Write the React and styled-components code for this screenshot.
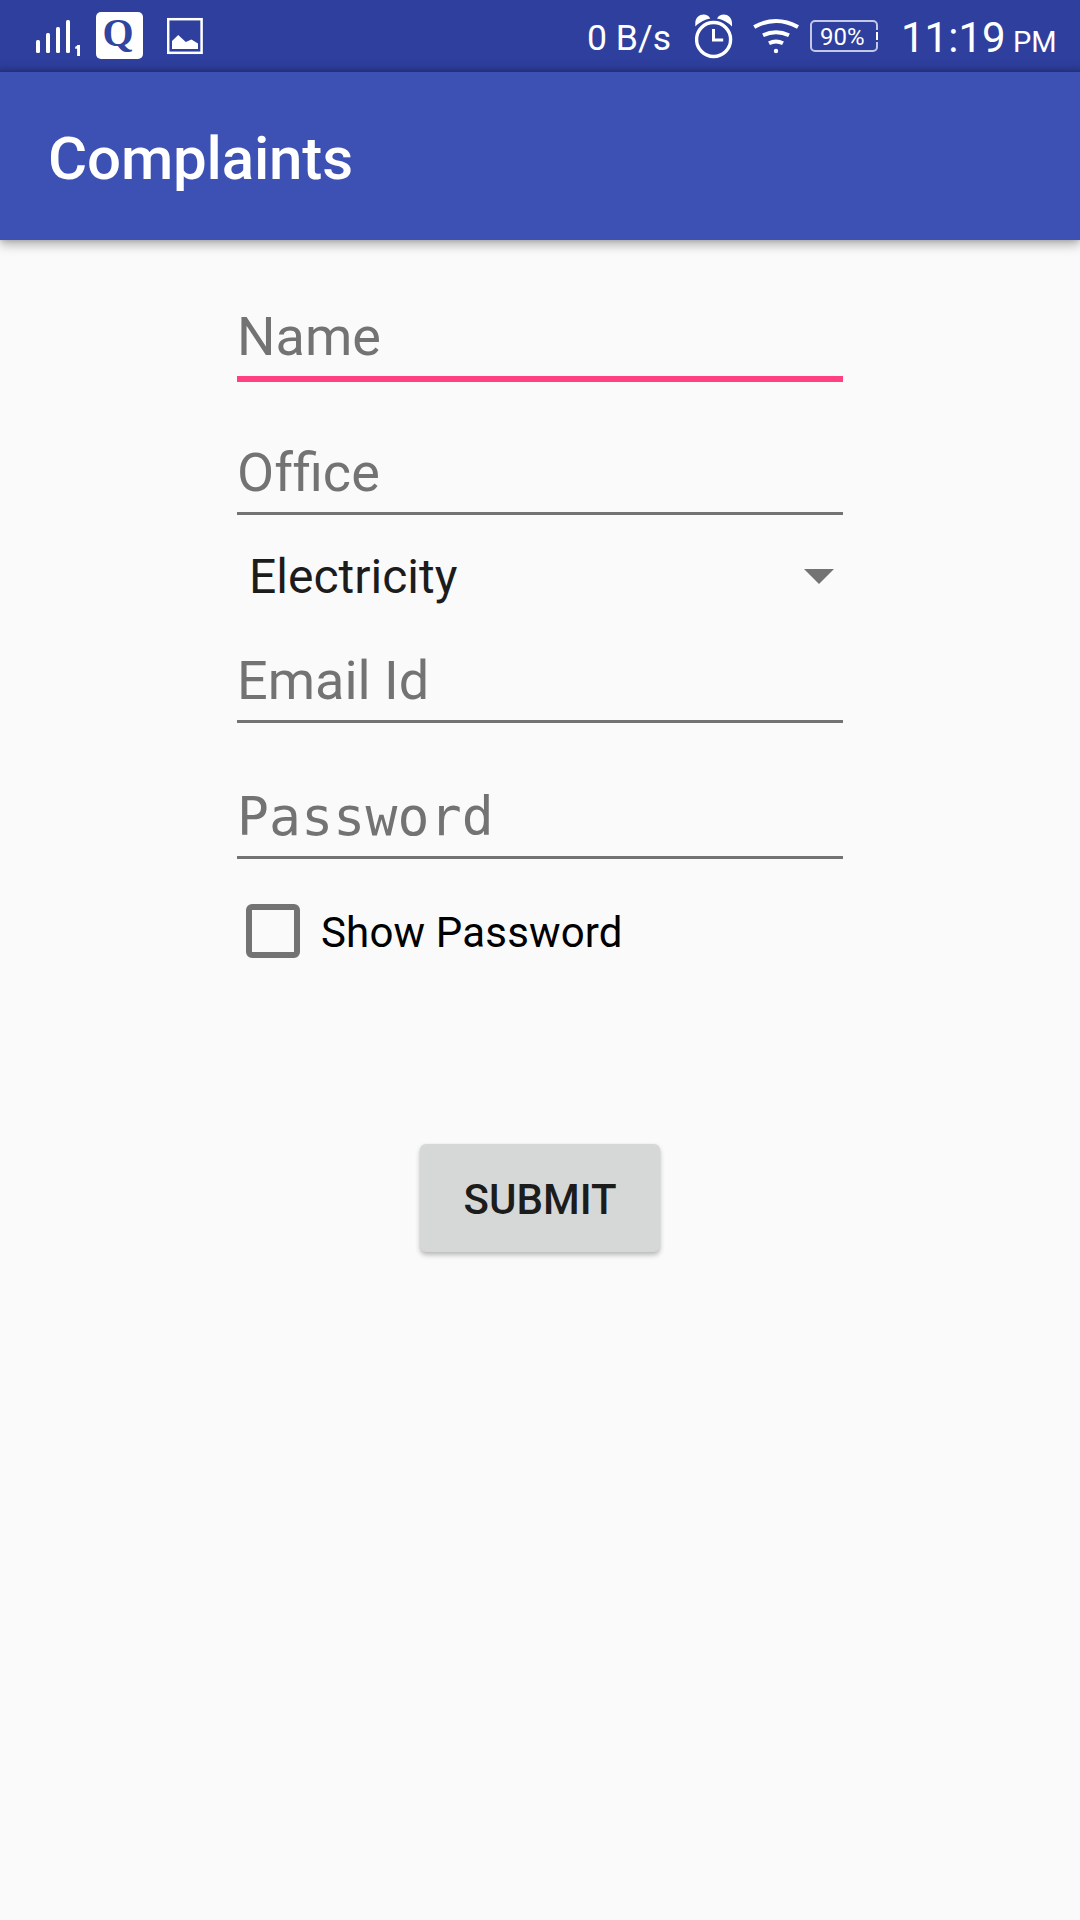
import React from "react";
import styled, { createGlobalStyle } from "styled-components";

const GlobalStyle = createGlobalStyle`
  *, *::before, *::after { box-sizing: border-box; }
  body { margin: 0; background: #fafafa; font-family: Roboto, sans-serif; }
`;

const Screen = styled.div`
  width: 1080px;
  height: 1920px;
  display: flex;
  flex-direction: column;
  background: #fafafa;
  overflow: hidden;
`;

const StatusBar = styled.div`
  flex: none;
  height: 72px;
  display: flex;
  justify-content: space-between;
  padding: 0 26px 0 36px;
  color: #fff;
  background: linear-gradient(to top, #27347f 0, #2b3a92 4px, #2d3d9a 8px, #2e3f9e 14px);
`;

const StatusGroup = styled.div`
  display: flex;
  align-items: flex-start;
`;

const StatusIcon = styled.svg`
  display: block;
  flex: none;
  width: ${(p) => p.$w}px;
  height: 72px;
  margin-right: ${(p) => p.$gap || 0}px;
`;

const AppBadge = styled.div`
  width: 47px;
  height: 47px;
  margin: 12px 24px 0 0;
  border-radius: 5px;
  background: #fff;
  color: #2f459f;
  font: 700 40px/41px "Liberation Serif", serif;
  text-align: center;
  padding-right: 3px;
`;

const StatusText = styled.span`
  display: block;
  font-size: ${(p) => p.$size}px;
  line-height: ${(p) => p.$line}px;
  width: ${(p) => p.$w}px;
  white-space: nowrap;
`;

const Battery = styled.div`
  display: flex;
  position: relative;
  width: 68px;
  height: 32px;
  margin: 20px 23px 0 0;
  padding-left: 8px;
  border: 2px solid #c3c8e6;
  border-radius: 5px;

  &::after {
    content: "";
    position: absolute;
    right: -2px;
    top: 8px;
    width: 2px;
    height: 12px;
    background: linear-gradient(#2e3f9e 2px, #fff 2px, #fff 10px, #2e3f9e 10px);
  }
`;

const AppBar = styled.header`
  flex: none;
  height: 168px;
  padding-left: 48px;
  display: flex;
  align-items: center;
  background: #3d51b4;
  box-shadow: 0 5px 10px rgba(0, 0, 0, 0.28), 0 1px 4px rgba(0, 0, 0, 0.12);
`;

const Title = styled.h1`
  margin: 0;
  padding-top: 5px;
  color: #fff;
  font-size: 60px;
  font-weight: 500;
  line-height: 70px;
  letter-spacing: -0.15px;
`;

const Form = styled.main`
  width: 606px;
  margin: 18px auto 0;
  display: flex;
  flex-direction: column;
`;

const Field = styled.div`
  height: 136px;
  padding-top: 42px;
  color: #737373;
  font-size: 54px;
  line-height: 73px;
`;

const FieldText = styled.div`
  height: 76px;
`;

const MonoText = styled(FieldText)`
  font-family: "DejaVu Sans Mono", monospace;
  font-size: 53px;
  letter-spacing: 0.2px;
`;

/* Shapes its letters apart from the following text, so no ligature spans the two. */
const Unjoined = styled.span`
  display: inline-block;
`;

const Underline = styled.div`
  height: ${(p) => (p.$active ? 6 : 3)}px;
  background: ${(p) => (p.$active ? "#ff4081" : "#737373")};
`;

const Spinner = styled.div`
  height: 72px;
  display: flex;
  justify-content: space-between;
  padding: 0 9px 0 12px;
  color: #1c1c1c;
  font-size: 48px;
  line-height: 93px;
`;

const Caret = styled.svg`
  width: 30px;
  height: 15px;
  margin-top: 39px;
  fill: #737373;
`;

const CheckRow = styled.div`
  display: flex;
  align-items: center;
  height: 54px;
  margin: 30px 0 0 9px;
  gap: 21px;
  color: #000;
`;

const CheckBox = styled.span`
  width: 54px;
  height: 54px;
  border: 6px solid #737373;
  border-radius: 6px;
`;

const CheckLabel = styled.span`
  padding-top: 4px;
  font-size: 42px;
  line-height: 56px;
  letter-spacing: 0.17px;
`;

const SubmitButton = styled.button`
  align-self: center;
  width: 240px;
  height: 108px;
  margin-top: 186px;
  padding: 4px 0 0;
  border: 0;
  border-radius: 6px;
  background: #d6d8d7;
  color: #1c1c1c;
  font: 500 42px/50px Roboto, sans-serif;
  box-shadow: 0 3px 5px rgba(0, 0, 0, 0.26), 0 0 2px rgba(0, 0, 0, 0.06);
`;

function SignalIcon() {
  return (
    <StatusIcon $w={45} $gap={15} viewBox="36 0 45 72" fill="#fff">
      <rect x="36" y="40" width="4" height="13" rx="1.5" />
      <rect x="46" y="33" width="4" height="20" rx="1.5" />
      <rect x="56" y="27" width="4" height="26" rx="1.5" />
      <rect x="66" y="20" width="4" height="33" rx="1.5" />
      <path d="M77.3 45h2.7v11h-2.900v-7.200h-1.900v-2.100q1.600-.2 2.100-1.700z" />
    </StatusIcon>
  );
}

function PictureIcon() {
  return (
    <StatusIcon $w={36} viewBox="167 0 36 72">
      <rect x="168.2" y="19.2" width="33.4" height="33.6" fill="none" stroke="#fff" strokeWidth="2.5" />
      <path d="M172 41l6.200-6 7.600 7 5.600-2.600 6.600 4V49h-26z" fill="#fff" />
    </StatusIcon>
  );
}

function AlarmIcon() {
  return (
    <StatusIcon $w={38} $gap={20} viewBox="695 0 38 72">
      <circle cx="713.6" cy="39.5" r="17" fill="none" stroke="#fff" strokeWidth="3.4" />
      <path
        d="M695.300 26.500v-3.300c0-10 12-11.400 15-4.700q-8.500 1.500-15 8zM732 26.500v-3.300c0-10-12-11.400-15-4.700q8.500 1.500 15 8z"
        fill="#fff"
      />
      <path d="M713.500 29v11h9.700" fill="none" stroke="#fff" strokeWidth="3" />
    </StatusIcon>
  );
}

function WifiIcon() {
  return (
    <StatusIcon $w={46} $gap={11} viewBox="753 0 46 72" fill="none" stroke="#fff" strokeWidth="4">
      <path d="M754.200 27Q776 14.800 798 27" />
      <path d="M763 35.300q13-6 26 0" />
      <path d="M769 43.300q7-3.600 14 0" />
      <circle cx="776" cy="51" r="2.200" fill="#fff" stroke="none" />
    </StatusIcon>
  );
}

function TextField({ label, active }) {
  return (
    <Field>
      <FieldText>{label}</FieldText>
      <Underline $active={active} />
    </Field>
  );
}

export default function App() {
  return (
    <>
      <GlobalStyle />
      <Screen>
        <StatusBar>
          <StatusGroup>
            <SignalIcon />
            <AppBadge>Q</AppBadge>
            <PictureIcon />
          </StatusGroup>
          <StatusGroup>
            <StatusText $size={35.6} $line={76} $w={108}>0 B/s</StatusText>
            <AlarmIcon />
            <WifiIcon />
            <Battery>
              <StatusText $size={24} $line={30} $w={44}>90%</StatusText>
            </Battery>
            <StatusText $size={42} $line={75} $w={112}>11:19</StatusText>
            <StatusText $size={29} $line={84} $w={41}>PM</StatusText>
          </StatusGroup>
        </StatusBar>
        <AppBar>
          <Title>Complaints</Title>
        </AppBar>
        <Form>
          <TextField label="Name" active />
          <TextField label={<><Unjoined>Of</Unjoined>fice</>} />
          <Spinner>
            <span>Electricity</span>
            <Caret viewBox="0 0 30 15">
              <path d="M0 0h30L15 15z" />
            </Caret>
          </Spinner>
          <TextField label="Email Id" />
          <Field>
            <MonoText>Password</MonoText>
            <Underline />
          </Field>
          <CheckRow>
            <CheckBox />
            <CheckLabel>Show Password</CheckLabel>
          </CheckRow>
          <SubmitButton>SUBMIT</SubmitButton>
        </Form>
      </Screen>
    </>
  );
}
